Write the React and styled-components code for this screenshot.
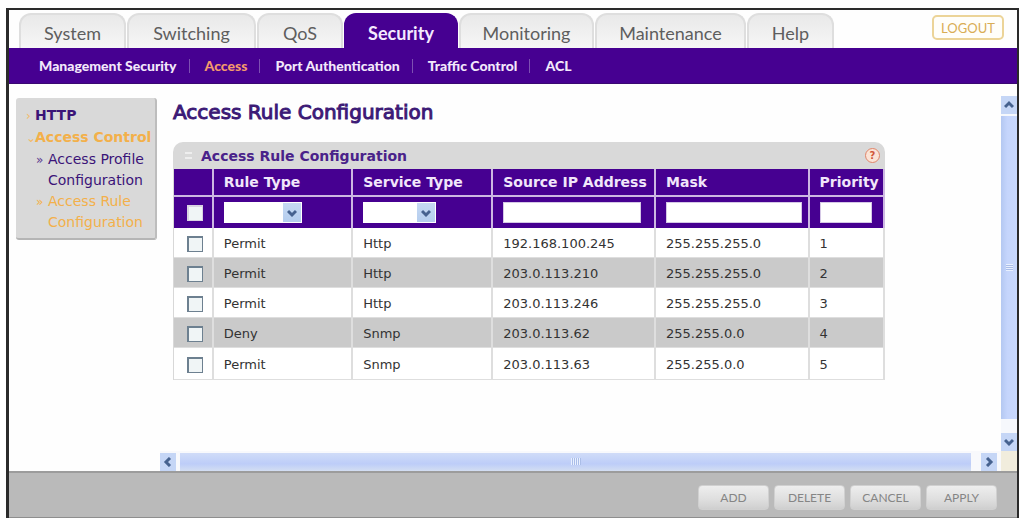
import React, { useState } from "react";
import styled, { createGlobalStyle } from "styled-components";

const GlobalStyle = createGlobalStyle`
  * {
    box-sizing: border-box;
  }
  body {
    margin: 0;
    background: #fefefe;
    font-family: "DejaVu Sans", Verdana, sans-serif;
  }
  button, input, select {
    font-family: inherit;
  }
`;

const Page = styled.div`
  display: flex;
  min-height: 100vh;
  padding: 8px 1px 0 6px;
`;

const Frame = styled.div`
  flex: 1;
  display: flex;
  flex-direction: column;
  border: 2px solid #2a2a2a;
  border-left-width: 3px;
  border-bottom: none;
`;

const TopBar = styled.header`
  display: flex;
  align-items: flex-start;
  justify-content: space-between;
  padding: 3px 13px 0 10px;
`;

const Tabs = styled.nav`
  display: flex;
  gap: 1px;
`;

const Tab = styled.a`
  width: ${props => props.$width}px;
  height: 35px;
  line-height: 36px;
  text-align: center;
  text-decoration: none;
  font-family: Lato, sans-serif;
  font-size: 18px;
  font-weight: ${props => (props.$active ? 700 : 400)};
  color: ${props => (props.$active ? "#f4e9ff" : "#5e5e5e")};
  background: ${props =>
    props.$active ? "#460091" : "linear-gradient(#e9e9e9, #f6f6f6)"};
  border: 2px solid ${props => (props.$active ? "#460091" : "#dedede")};
  border-bottom: none;
  border-radius: 12px 12px 0 0;
`;

const Logout = styled.button`
  width: 72px;
  height: 25px;
  margin-top: 2px;
  padding: 0;
  border: 2px solid #ecd498;
  border-radius: 5px;
  background: #fffefa;
  color: #d9ad55;
  font-family: Lato, sans-serif;
  font-size: 13px;
  font-weight: 400;
`;

const SubNav = styled.nav`
  display: flex;
  align-items: center;
  height: 36px;
  padding: 0 30px;
  background: #460091;
  border-bottom: 1px solid #3a0872;
`;

const SubLink = styled.a`
  padding-right: 12px;
  margin-right: 15px;
  line-height: 14px;
  border-right: 1px solid #7d50b2;
  color: ${props => (props.$active ? "#f49a6c" : "#f3e8fb")};
  font-family: Lato, sans-serif;
  font-size: 14px;
  font-weight: 900;
  text-decoration: none;

  &:last-child {
    border-right: none;
  }
`;

const Body = styled.div`
  flex: 1;
  display: grid;
  grid-template-columns: 151px 1fr 16px;
  grid-template-rows: 1fr 20px;
  padding-top: 12px;
`;

const Side = styled.aside`
  grid-row: 1 / 3;
  padding: 2px 3px 0 7px;
`;

const Menu = styled.ul`
  margin: 0;
  padding: 7px 0 5px 10px;
  list-style: none;
  background: #d9d9d9;
  border-right: 2px solid #bdbdbd;
  border-bottom: 2px solid #b5b5b5;
  border-radius: 3px;
`;

const MenuItem = styled.li`
  display: flex;
  align-items: baseline;
  padding-left: ${props => (props.$sub ? 10 : 0)}px;
`;

const Marker = styled.span`
  flex: none;
  width: ${props => (props.$sub ? 12 : 9)}px;
  line-height: 21px;
  color: ${props => props.$color};
  font-size: 12px;
`;

const MenuLink = styled.a`
  color: ${props => (props.$active ? "#f3b04a" : "#3b1478")};
  font-size: 14px;
  font-weight: ${props => (props.$sub ? 400 : 700)};
  line-height: 21px;
  text-decoration: none;
`;

const Main = styled.main`
  min-width: 0;
  padding: 4px 116px 24px 13px;
`;

const Title = styled.h1`
  margin: 0 0 17px;
  color: #3c1a76;
  font-size: 20px;
  font-weight: 400;
  line-height: 25px;
  -webkit-text-stroke: 1px #3c1a76;
`;

const PanelHead = styled.div`
  display: flex;
  align-items: center;
  height: 27px;
  padding: 0 5px 0 12px;
  background: #d9d9d9;
  border-radius: 10px 10px 0 0;
`;

const Bullet = styled.span`
  width: 7px;
  height: 7px;
  margin-right: 9px;
  border-top: 2px solid #eee;
  border-bottom: 2px solid #eee;
`;

const PanelTitle = styled.h2`
  flex: 1;
  margin: 0;
  color: #4a228a;
  font-size: 14px;
  font-weight: 700;
`;

const HelpButton = styled.button`
  width: 15px;
  height: 15px;
  padding: 0;
  border: 1px solid #e0856a;
  border-radius: 50%;
  background: #fbe3d6;
  color: #d0573a;
  font-size: 10px;
  font-weight: 700;
  line-height: 12px;
`;

const Table = styled.table`
  width: 100%;
  table-layout: fixed;
  border-collapse: separate;
  border-spacing: 0;
  border-left: 1px solid #d8d8d8;
`;

const Col = styled.col`
  width: ${props => props.$width}%;
`;

const Th = styled.th`
  height: 28px;
  padding: 0 0 0 10px;
  background: #460091;
  border-right: 2px solid #cdb8e2;
  border-bottom: 2px solid #cdb8e2;
  color: #f1e6fa;
  font-size: 14px;
  font-weight: 700;
  text-align: left;
  white-space: nowrap;
`;

const FilterCell = styled.td`
  height: 31px;
  padding: 0 6px 0 10px;
  background: #460091;
  border-right: 2px solid #cdb8e2;
`;

const Td = styled.td`
  height: ${props => (props.$last ? 32 : 30)}px;
  padding: 2px 0 0 10px;
  background: ${props => (props.$shaded ? "#cacaca" : "#fff")};
  border-right: 2px solid #dedede;
  border-bottom: 1px solid #dedede;
  color: #333;
  font-size: 13px;
`;

const Check = styled.input.attrs({ type: "checkbox" })`
  appearance: none;
  display: block;
  width: 16px;
  height: 16px;
  margin: 0 0 0 3px;
  border: 2px solid ${props => (props.$light ? "#d9d3e2" : "#6d8090")};
  border-right-width: 1px;
  border-bottom-width: 1px;
  background: #f0f5f6;

  &:checked {
    background: #7b9bd0;
  }
`;

const TextField = styled.input`
  display: block;
  width: 100%;
  max-width: ${props => (props.$short ? 52 : 138)}px;
  height: 21px;
  padding: 0 4px;
  border: 1px solid #d5c8e6;
  background: #fff;
  font-size: 12px;
`;

const SelectBox = styled.span`
  display: flex;
  width: ${props => props.$width}px;
  height: 21px;
  padding: 1px;
  background: #fff;
`;

const Select = styled.select`
  appearance: none;
  flex: none;
  width: 100%;
  border: none;
  border-radius: 0;
  padding: 0 20px 0 4px;
  font-size: 12px;
  background: linear-gradient(#c6d9f3, #b4cdee) right / 18px 100% no-repeat #fff;
`;

const SelectArrow = styled.span`
  display: flex;
  flex: none;
  align-items: center;
  margin-left: -14px;
  pointer-events: none;
`;

const HScroll = styled.div`
  display: flex;
  align-items: center;
  padding: 1px 4px 0 0;
  background: #f8f9fc;
`;

const VScroll = styled.div`
  display: flex;
  flex-direction: column;
  background: #f6f8fc;
`;

const ScrollButton = styled.button`
  display: flex;
  flex: none;
  align-items: center;
  justify-content: center;
  width: 16px;
  height: 18px;
  padding: 0;
  border: none;
  background: #c5d6f6;
`;

const HThumb = styled.div`
  flex: 1;
  display: flex;
  align-items: center;
  justify-content: center;
  height: 18px;
  margin: 0 10px 0 4px;
  background: linear-gradient(#d0dcf8, #bdcdf8 60%, #d3def2);
`;

const VThumb = styled.div`
  flex: 1;
  display: flex;
  align-items: center;
  justify-content: center;
  margin: 2px 0 14px;
  background: linear-gradient(90deg, #b4c8f1, #c5d5fc 40%, #c8d8fc);
`;

const Grip = styled.span`
  width: ${props => (props.$vertical ? 7 : 10)}px;
  height: 7px;
  background: repeating-linear-gradient(
    ${props => (props.$vertical ? "180deg" : "90deg")},
    #e8f0ff 0 1px,
    #aabde8 1px 2px
  );
`;

const Corner = styled.div`
  background: #f1eddd;
`;

const Footer = styled.footer`
  display: flex;
  align-items: center;
  justify-content: flex-end;
  gap: 5px;
  height: 47px;
  padding: 5px 20px 0 0;
  background: #bababa;
  border-top: 2px solid #9c9c9c;
  border-bottom: 1px solid #8e8e8e;
`;

const ActionButton = styled.button`
  width: 71px;
  height: 25px;
  padding: 0;
  border: 1px solid #d0d0d0;
  border-radius: 4px;
  background: linear-gradient(#eeeeee, #dedede 60%, #cfcfcf);
  color: #858585;
  font-family: Lato, sans-serif;
  font-size: 12px;
`;

const arrows = {
  up: "M1 7l4-4 4 4",
  down: "M1 3l4 4 4-4",
  left: "M7 1l-4 4 4 4",
  right: "M3 1l4 4-4 4"
};

function Arrow({ direction }) {
  return (
    <svg width="10" height="10" viewBox="0 0 10 10" aria-hidden="true">
      <path d={arrows[direction]} fill="none" stroke="#46628f" strokeWidth="3" />
    </svg>
  );
}

const tabs = [
  { label: "System", width: 107 },
  { label: "Switching", width: 129 },
  { label: "QoS", width: 86 },
  { label: "Security", width: 114 },
  { label: "Monitoring", width: 135 },
  { label: "Maintenance", width: 151 },
  { label: "Help", width: 87 }
];

const subLinks = [
  "Management Security",
  "Access",
  "Port Authentication",
  "Traffic Control",
  "ACL"
];

const rules = [
  ["Permit", "Http", "192.168.100.245", "255.255.255.0", 1],
  ["Permit", "Http", "203.0.113.210", "255.255.255.0", 2],
  ["Permit", "Http", "203.0.113.246", "255.255.255.0", 3],
  ["Deny", "Snmp", "203.0.113.62", "255.255.0.0", 4],
  ["Permit", "Snmp", "203.0.113.63", "255.255.0.0", 5]
];

const columns = [5.6, 19.6, 19.7, 22.9, 21.6, 10.6];

function SideMenu() {
  return (
    <Side>
      <Menu>
        <MenuItem>
          <Marker $color="#f3b96a">›</Marker>
          <MenuLink href="#http">HTTP</MenuLink>
        </MenuItem>
        <MenuItem>
          <Marker $color="#f3b96a">⌄</Marker>
          <MenuLink href="#control" $active>Access Control</MenuLink>
        </MenuItem>
        <MenuItem $sub>
          <Marker $sub $color="#5b3a90">»</Marker>
          <MenuLink href="#profile" $sub>Access Profile Configuration</MenuLink>
        </MenuItem>
        <MenuItem $sub>
          <Marker $sub $color="#f3b04a">»</Marker>
          <MenuLink href="#rule" $sub $active>Access Rule Configuration</MenuLink>
        </MenuItem>
      </Menu>
    </Side>
  );
}

function FilterSelect({ label, options, value, onChange, width }) {
  return (
    <SelectBox $width={width}>
      <Select aria-label={label} value={value} onChange={onChange}>
        <option value=""></option>
        {options.map(option => (
          <option key={option}>{option}</option>
        ))}
      </Select>
      <SelectArrow>
        <Arrow direction="down" />
      </SelectArrow>
    </SelectBox>
  );
}

function RuleTable() {
  const [form, setForm] = useState({ rule: "", service: "" });
  const [selected, setSelected] = useState([]);

  const toggle = id => {
    setSelected(
      selected.includes(id) ? selected.filter(s => s !== id) : [...selected, id]
    );
  };

  return (
    <Table>
      <colgroup>
        {columns.map((width, i) => (
          <Col key={i} $width={width} />
        ))}
      </colgroup>
      <thead>
        <tr>
          <Th></Th>
          <Th>Rule Type</Th>
          <Th>Service Type</Th>
          <Th>Source IP Address</Th>
          <Th>Mask</Th>
          <Th>Priority</Th>
        </tr>
      </thead>
      <tbody>
        <tr>
          <FilterCell>
            <Check
              $light
              aria-label="Select all"
              checked={selected.length === rules.length}
              onChange={e =>
                setSelected(e.target.checked ? rules.map(r => r[4]) : [])
              }
            />
          </FilterCell>
          <FilterCell>
            <FilterSelect
              label="Rule Type"
              width={78}
              options={["Permit", "Deny"]}
              value={form.rule}
              onChange={e => setForm({ ...form, rule: e.target.value })}
            />
          </FilterCell>
          <FilterCell>
            <FilterSelect
              label="Service Type"
              width={73}
              options={["Http", "Snmp"]}
              value={form.service}
              onChange={e => setForm({ ...form, service: e.target.value })}
            />
          </FilterCell>
          <FilterCell>
            <TextField aria-label="Source IP Address" />
          </FilterCell>
          <FilterCell>
            <TextField aria-label="Mask" />
          </FilterCell>
          <FilterCell>
            <TextField $short aria-label="Priority" />
          </FilterCell>
        </tr>
        {rules.map((rule, i) => (
          <tr key={rule[4]}>
            <Td $shaded={i % 2 === 1}>
              <Check
                aria-label={`Select rule ${rule[4]}`}
                checked={selected.includes(rule[4])}
                onChange={() => toggle(rule[4])}
              />
            </Td>
            {rule.map((value, j) => (
              <Td key={j} $shaded={i % 2 === 1} $last={i === rules.length - 1}>
                {value}
              </Td>
            ))}
          </tr>
        ))}
      </tbody>
    </Table>
  );
}

export default function App() {
  return (
    <Page>
      <GlobalStyle />
      <Frame>
        <TopBar>
          <Tabs>
            {tabs.map(tab => (
              <Tab
                key={tab.label}
                href={`#${tab.label}`}
                $width={tab.width}
                $active={tab.label === "Security"}
              >
                {tab.label}
              </Tab>
            ))}
          </Tabs>
          <Logout>LOGOUT</Logout>
        </TopBar>
        <SubNav>
          {subLinks.map(label => (
            <SubLink key={label} href="#" $active={label === "Access"}>
              {label}
            </SubLink>
          ))}
        </SubNav>
        <Body>
          <SideMenu />
          <Main>
            <Title>Access Rule Configuration</Title>
            <PanelHead>
              <Bullet />
              <PanelTitle>Access Rule Configuration</PanelTitle>
              <HelpButton aria-label="Help">?</HelpButton>
            </PanelHead>
            <RuleTable />
          </Main>
          <VScroll>
            <ScrollButton aria-label="Scroll up">
              <Arrow direction="up" />
            </ScrollButton>
            <VThumb>
              <Grip $vertical />
            </VThumb>
            <ScrollButton aria-label="Scroll down">
              <Arrow direction="down" />
            </ScrollButton>
          </VScroll>
          <HScroll>
            <ScrollButton aria-label="Scroll left">
              <Arrow direction="left" />
            </ScrollButton>
            <HThumb>
              <Grip />
            </HThumb>
            <ScrollButton aria-label="Scroll right">
              <Arrow direction="right" />
            </ScrollButton>
          </HScroll>
          <Corner />
        </Body>
        <Footer>
          <ActionButton>ADD</ActionButton>
          <ActionButton>DELETE</ActionButton>
          <ActionButton>CANCEL</ActionButton>
          <ActionButton>APPLY</ActionButton>
        </Footer>
      </Frame>
    </Page>
  );
}
